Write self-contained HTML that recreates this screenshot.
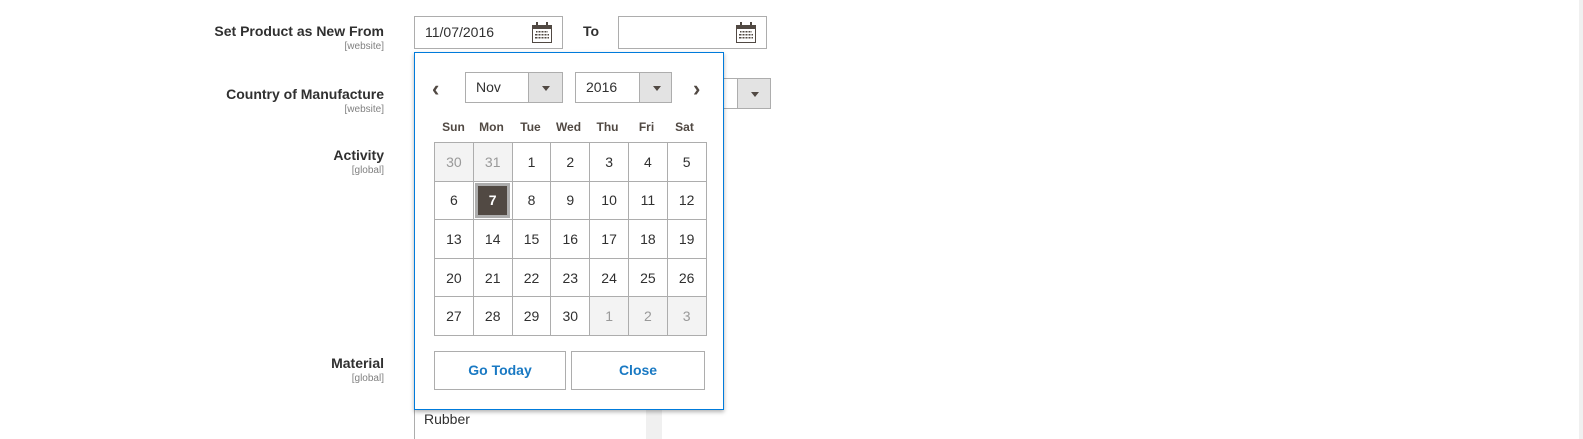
<!DOCTYPE html>
<html><head><meta charset="utf-8"><style>
*{box-sizing:border-box;margin:0;padding:0}
body{width:1583px;height:439px;overflow:hidden;background:#fff;font-family:"Liberation Sans",sans-serif;color:#303030;position:relative}
.a{position:absolute}
.lbl{position:absolute;right:1199px;text-align:right;font-size:14px;font-weight:600;color:#303030;white-space:nowrap}
.sc{position:absolute;right:1199px;text-align:right;font-size:10px;color:#808080}
.inp{position:absolute;border:1px solid #adadad;background:#fff;height:33px}
.cal{position:absolute;left:117px;top:5px}
.grid{position:absolute;left:434px;top:142px;border-collapse:collapse}
.grid td{width:38.8px;height:38.6px;border:1px solid #adadad;text-align:center;font-size:14px;color:#303030;padding:0}
.grid td.o{background:#f3f3f3;color:#999}
.hd{position:absolute;top:120px;font-size:12px;font-weight:700;color:#514943;width:39px;text-align:center}
.sel{position:absolute;border:1px solid #adadad;height:31px;background:#fff;font-size:14px;padding:6px 10px}
.sel i{position:absolute;right:0;top:0;width:34px;height:29px;background:#e3e3e3;border-left:1px solid #adadad}
.sel i:after{content:"";position:absolute;left:13px;top:13px;border:4px solid transparent;border-top:5px solid #514943}
.btn{position:absolute;top:351px;height:39px;border:1px solid #adadad;color:#1979c3;font-weight:700;font-size:14px;text-align:center;line-height:37px;background:#fff}
</style></head><body>
<svg width="0" height="0" style="position:absolute"><defs><g id="ic">
<rect x="0.5" y="3.5" width="19" height="17" fill="#fff" stroke="#514943"/>
<rect x="0" y="3" width="20" height="4" fill="#514943"/>
<rect x="4" y="0" width="2" height="5" fill="#514943"/><rect x="14" y="0" width="2" height="5" fill="#514943"/>
<g fill="#514943"><rect x="4" y="9" width="12" height="1.5"/><rect x="3" y="12" width="14" height="1.5"/><rect x="3" y="15" width="14" height="1.5"/></g>
<g fill="#fff"><rect x="5.5" y="9" width="1" height="8"/><rect x="8.5" y="9" width="1" height="8"/><rect x="11.5" y="9" width="1" height="8"/><rect x="14.5" y="9" width="1" height="8"/></g>
</g></defs></svg>
<div class="lbl" style="top:23px">Set Product as New From</div>
<div class="sc" style="top:41px">[website]</div>
<div class="lbl" style="top:86px">Country of Manufacture</div>
<div class="sc" style="top:104px">[website]</div>
<div class="lbl" style="top:147px">Activity</div>
<div class="sc" style="top:165px">[global]</div>
<div class="lbl" style="top:355px">Material</div>
<div class="sc" style="top:373px">[global]</div>

<div class="inp" style="left:414px;top:16px;width:149px"><span class="a" style="left:10px;top:7px;font-size:14px;color:#303030">11/07/2016</span><svg class="cal" width="21" height="22"><use href="#ic"/></svg></div>
<div class="a" style="left:583px;top:23px;font-size:14px;font-weight:600">To</div>
<div class="inp" style="left:618px;top:16px;width:149px"><svg class="cal" width="21" height="22"><use href="#ic"/></svg></div>

<div class="sel" style="left:700px;top:78px;width:71px;height:31px"><i style="width:33px"></i></div>

<div class="a" style="left:414px;top:400px;width:248px;height:39px;border-left:1px solid #adadad"></div>
<div class="a" style="left:646px;top:140px;width:16px;height:299px;background:#f0f0f0"></div>
<div class="a" style="left:424px;top:411px;font-size:14px">Rubber</div>
<div class="a" style="left:1579px;top:0;width:4px;height:439px;background:#f0f0f0"></div>

<div class="a" style="left:414px;top:52px;width:310px;height:358px;border:1px solid #007bdb;background:#fff;box-shadow:0 2px 4px rgba(0,0,0,.3)"></div>
<div class="a" style="left:432px;top:76px;font-size:22px;color:#514943;font-weight:700">‹</div>
<div class="a" style="left:693px;top:76px;font-size:22px;color:#514943;font-weight:700">›</div>
<div class="sel" style="left:465px;top:72px;width:98px">Nov<i></i></div>
<div class="sel" style="left:575px;top:72px;width:97px">2016<i style="width:32px"></i></div>
<div class="hd" style="left:434px">Sun</div><div class="hd" style="left:472px">Mon</div><div class="hd" style="left:511px">Tue</div><div class="hd" style="left:549px">Wed</div><div class="hd" style="left:588px">Thu</div><div class="hd" style="left:627px">Fri</div><div class="hd" style="left:665px">Sat</div>
<table class="grid">
<tr><td class="o">30</td><td class="o">31</td><td>1</td><td>2</td><td>3</td><td>4</td><td>5</td></tr>
<tr><td>6</td><td style="padding:0"><div style="margin:0 auto;width:35px;height:35px;border:3px solid #adadad;background:#514943;color:#fff;font-weight:700;line-height:29px">7</div></td><td>8</td><td>9</td><td>10</td><td>11</td><td>12</td></tr>
<tr><td>13</td><td>14</td><td>15</td><td>16</td><td>17</td><td>18</td><td>19</td></tr>
<tr><td>20</td><td>21</td><td>22</td><td>23</td><td>24</td><td>25</td><td>26</td></tr>
<tr><td>27</td><td>28</td><td>29</td><td>30</td><td class="o">1</td><td class="o">2</td><td class="o">3</td></tr>
</table>
<div class="btn" style="left:434px;width:132px">Go Today</div>
<div class="btn" style="left:571px;width:134px">Close</div>
</body></html>
